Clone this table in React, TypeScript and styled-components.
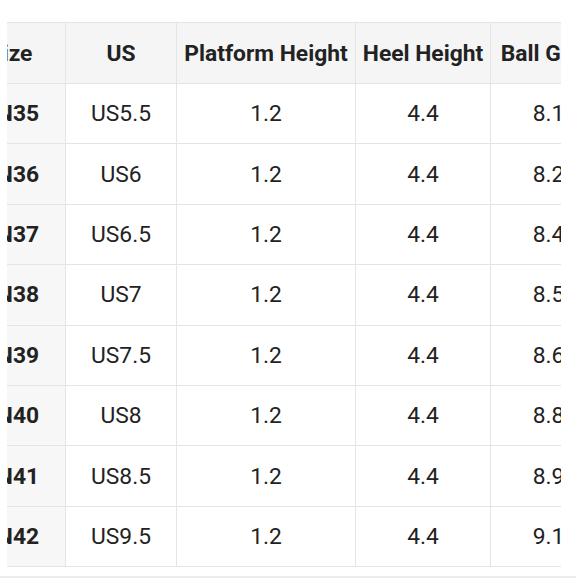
import React, { useLayoutEffect, useRef } from "react";
import styled, { createGlobalStyle } from "styled-components";

const Global = createGlobalStyle`
  html, body { margin: 0; padding: 0; background: #ffffff; }
  body { font-family: Roboto, "Noto Sans", "Liberation Sans", sans-serif; color: #222; }
`;

const Page = styled.div`
  width: 576px;
  height: 580px;
  overflow: hidden;
  padding-top: 22px;
  box-sizing: border-box;
  display: flex;
  flex-direction: column;
`;

const Scroller = styled.div`
  margin-left: 7px;
  width: 554px;
  overflow-x: auto;
  scrollbar-width: none;
  &::-webkit-scrollbar { display: none; }
`;

const Table = styled.table`
  border-collapse: collapse;
  table-layout: fixed;
  width: max-content;
`;

const Th = styled.th<{ $w: number }>`
  width: ${(p) => p.$w}px;
  height: 61px;
  box-sizing: border-box;
  background: #f5f5f5;
  border: 1px solid #e4e4e4;
  font-weight: 700;
  font-size: 22.8px;
  color: #222;
  text-align: center;
  white-space: nowrap;
  padding: 0;
`;

const Td = styled.td<{ $head?: boolean }>`
  height: 60.4px;
  box-sizing: border-box;
  border: 1px solid #e4e4e4;
  background: ${(p) => (p.$head ? "#f7f7f7" : "#ffffff")};
  font-weight: ${(p) => (p.$head ? 700 : 400)};
  font-size: 22.8px;
  color: #222;
  text-align: center;
  white-space: nowrap;
  padding: 0;
`;

const Divider = styled.div`
  margin-top: 9px;
  width: 100%;
  height: 2px;
  background: #ececec;
`;

const cols = [
  { label: "Size", w: 110 },
  { label: "US", w: 111 },
  { label: "Platform Height", w: 179 },
  { label: "Heel Height", w: 135 },
  { label: "Ball Girth", w: 116 },
];

const rows = [
  ["CN35", "US5.5", "1.2", "4.4", "8.1"],
  ["CN36", "US6", "1.2", "4.4", "8.2"],
  ["CN37", "US6.5", "1.2", "4.4", "8.4"],
  ["CN38", "US7", "1.2", "4.4", "8.5"],
  ["CN39", "US7.5", "1.2", "4.4", "8.6"],
  ["CN40", "US8", "1.2", "4.4", "8.8"],
  ["CN41", "US8.5", "1.2", "4.4", "8.9"],
  ["CN42", "US9.5", "1.2", "4.4", "9.1"],
];

export default function App() {
  const ref = useRef<HTMLDivElement>(null);
  useLayoutEffect(() => {
    if (ref.current) ref.current.scrollLeft = 52;
  }, []);
  return (
    <>
      <Global />
      <Page>
        <Scroller ref={ref}>
          <Table>
            <thead>
              <tr>
                {cols.map((c) => (
                  <Th key={c.label} $w={c.w}>
                    {c.label}
                  </Th>
                ))}
              </tr>
            </thead>
            <tbody>
              {rows.map((r) => (
                <tr key={r[0]}>
                  {r.map((v, i) => (
                    <Td key={i} $head={i === 0}>
                      {v}
                    </Td>
                  ))}
                </tr>
              ))}
            </tbody>
          </Table>
        </Scroller>
        <Divider />
      </Page>
    </>
  );
}
